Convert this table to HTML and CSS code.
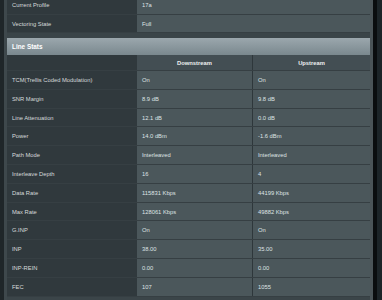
FILE: index.html
```html
<!DOCTYPE html>
<html>
<head>
<meta charset="utf-8">
<link rel="stylesheet" href="styles.css">
</head>
<body>
<div class="page">
  <div class="edge-l"></div>
  <div class="edge-l2"></div>
  <div class="main">
    <div class="kv">
      <div class="row first"><div class="lbl">Current Profile</div><div class="val">17a</div></div>
      <div class="row"><div class="lbl">Vectoring State</div><div class="val">Full</div></div>
    </div>
    <div class="gap"></div>
    <div class="section-title">Line Stats</div>
    <div class="stats">
      <div class="row head"><div class="lbl"></div><div class="val ds">Downstream</div><div class="val">Upstream</div></div>
      <div class="row"><div class="lbl">TCM(Trellis Coded Modulation)</div><div class="val ds">On</div><div class="val">On</div></div>
      <div class="row"><div class="lbl">SNR Margin</div><div class="val ds">8.9 dB</div><div class="val">9.8 dB</div></div>
      <div class="row"><div class="lbl">Line Attenuation</div><div class="val ds">12.1 dB</div><div class="val">0.0 dB</div></div>
      <div class="row"><div class="lbl">Power</div><div class="val ds">14.0 dBm</div><div class="val">-1.6 dBm</div></div>
      <div class="row"><div class="lbl">Path Mode</div><div class="val ds">Interleaved</div><div class="val">Interleaved</div></div>
      <div class="row"><div class="lbl">Interleave Depth</div><div class="val ds">16</div><div class="val">4</div></div>
      <div class="row"><div class="lbl">Data Rate</div><div class="val ds">115831 Kbps</div><div class="val">44199 Kbps</div></div>
      <div class="row"><div class="lbl">Max Rate</div><div class="val ds">128061 Kbps</div><div class="val">49882 Kbps</div></div>
      <div class="row"><div class="lbl">G.INP</div><div class="val ds">On</div><div class="val">On</div></div>
      <div class="row"><div class="lbl">INP</div><div class="val ds">38.00</div><div class="val">35.00</div></div>
      <div class="row"><div class="lbl">INP-REIN</div><div class="val ds">0.00</div><div class="val">0.00</div></div>
      <div class="row"><div class="lbl">FEC</div><div class="val ds">107</div><div class="val">1055</div></div>
    </div>
  </div>
  <div class="edge-r"></div>
  <div class="edge-r2"></div>
</div>
</body>
</html>
```

FILE: styles.css
```css
html, body {
  margin: 0;
  padding: 0;
  background: #1c2428;
  overflow: hidden;
}
body {
  font-family: "Liberation Sans", Arial, sans-serif;
  font-size: 5.8px;
  color: #dfe3e4;
}
.page {
  display: flex;
  height: 300px;
  overflow: hidden;
}
.edge-l { width: 4px; background: #1f2629; }
.edge-l2 { width: 3px; background: #3e484c; }
.edge-r { width: 3px; background: #4a5458; }
.edge-r2 { width: 4px; background: #0a0d0f; }
.main {
  width: 363px;
  background: #3b4549;
  margin-top: -4.2px;
}
.row {
  display: grid;
  grid-template-columns: 130px 116px 1fr;
  height: 18.8px;
  box-sizing: border-box;
  border-bottom: 1px solid #363f43;
}
.kv .row {
  grid-template-columns: 130px 1fr;
}
.lbl, .val {
  display: flex;
  align-items: center;
  padding-left: 5px;
  white-space: nowrap;
}
.lbl {
  background: #30393d;
  color: #d6dadb;
  border-bottom: 0;
}
.val {
  background: #4b575b;
}
.val.ds {
  border-right: 1px solid #2e373b;
}
.gap {
  height: 4.5px;
  background: #3a4448;
}
.section-title {
  height: 17.5px;
  display: flex;
  align-items: center;
  padding-left: 5px;
  background: linear-gradient(#9ba7ad, #7a888e);
  color: #ffffff;
  font-weight: bold;
  font-size: 6.4px;
}
.row.head {
  height: 15.7px;
}
.row.head .val {
  background: #434e53;
  justify-content: center;
  padding-left: 0;
  font-weight: bold;
  color: #eef0f1;
}
```
